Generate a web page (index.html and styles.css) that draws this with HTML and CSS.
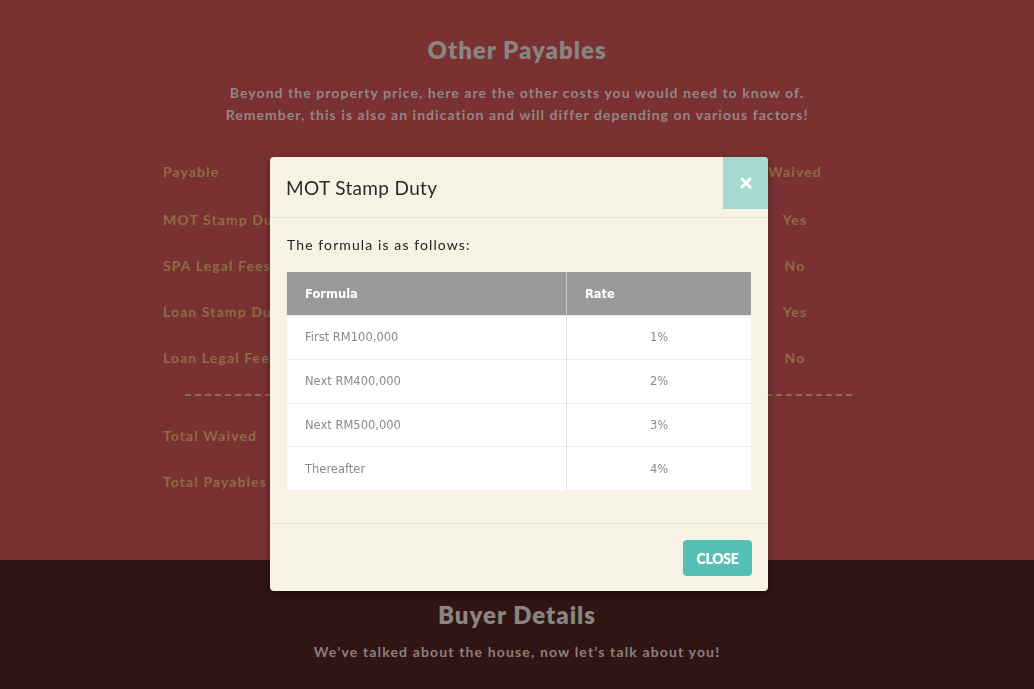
FILE: index.html
```html
<!DOCTYPE html>
<html>
<head>
<meta charset="utf-8">
<link rel="stylesheet" href="styles.css">
</head>
<body>
<section class="payables">
  <h2 class="sec-title">Other Payables</h2>
  <p class="sec-text">Beyond the property price, here are the other costs you would need to know of.<br>Remember, this is also an indication and will differ depending on various factors!</p>
  <div class="pay-table">
    <div class="pay-row pay-head"><span>Payable</span><span class="amt"></span><span class="waive">Waived</span></div>
    <div class="pay-row"><span>MOT Stamp Duty</span><span class="amt"></span><span class="waive">Yes</span></div>
    <div class="pay-row"><span>SPA Legal Fees</span><span class="amt"></span><span class="waive">No</span></div>
    <div class="pay-row"><span>Loan Stamp Duty</span><span class="amt"></span><span class="waive">Yes</span></div>
    <div class="pay-row"><span>Loan Legal Fees</span><span class="amt"></span><span class="waive">No</span></div>
    <div class="pay-divider"></div>
    <div class="pay-row"><span>Total Waived</span><span class="amt"></span><span class="waive"></span></div>
    <div class="pay-row"><span>Total Payables</span><span class="amt"></span><span class="waive"></span></div>
  </div>
</section>
<section class="buyer">
  <h2 class="sec-title">Buyer Details</h2>
  <p class="sec-text">We’ve talked about the house, now let’s talk about you!</p>
</section>

<div class="modal">
  <div class="modal-header">
    <h3 class="modal-title">MOT Stamp Duty</h3>
    <button class="modal-x" aria-label="close">
      <svg width="12" height="12" viewBox="0 0 12 12"><path d="M2 2 L10 10 M10 2 L2 10" stroke="#fff" stroke-width="3" stroke-linecap="round"/></svg>
    </button>
  </div>
  <div class="modal-body">
    <p class="modal-intro">The formula is as follows:</p>
    <table class="rate-table">
      <thead><tr><th>Formula</th><th>Rate</th></tr></thead>
      <tbody>
        <tr><td>First RM100,000</td><td class="rate">1%</td></tr>
        <tr><td>Next RM400,000</td><td class="rate">2%</td></tr>
        <tr><td>Next RM500,000</td><td class="rate">3%</td></tr>
        <tr><td>Thereafter</td><td class="rate">4%</td></tr>
      </tbody>
    </table>
  </div>
  <div class="modal-footer">
    <button class="btn-close">CLOSE</button>
  </div>
</div>
</body>
</html>
```

FILE: styles.css
```css
html, body {
  margin: 0;
  padding: 0;
}
body {
  width: 1034px;
  height: 689px;
  overflow: hidden;
  font-family: "Lato", "Open Sans", sans-serif;
  background: #311512;
}
.payables {
  background: #7a3131;
  height: 560px;
  box-sizing: border-box;
  padding-top: 34px;
}
.buyer {
  background: #301512;
  height: 129px;
  box-sizing: border-box;
  padding-top: 39px;
}
.sec-title {
  margin: 0;
  text-align: center;
  font-size: 24px;
  line-height: 32px;
  font-weight: 800;
  color: #8a8580;
  letter-spacing: 1px;
}
.sec-text {
  margin: 16px 0 0;
  text-align: center;
  font-size: 14px;
  line-height: 22px;
  font-weight: 700;
  letter-spacing: 1.05px;
  color: #948680;
}
.buyer .sec-text {
  margin-top: 10px;
  letter-spacing: 1.15px;
  color: #8c807c;
}
.pay-table {
  width: 708px;
  margin: 22px auto 0;
}
.pay-row {
  display: grid;
  grid-template-columns: 1fr 200px 64px 44px;
  height: 46px;
  align-items: center;
  font-size: 14px;
  font-weight: 700;
  letter-spacing: 1.1px;
  color: #8e6a48;
}
.pay-head {
  margin-bottom: 2px;
}
.pay-row .amt {
  text-align: center;
}
.pay-row .waive {
  text-align: center;
  white-space: nowrap;
}
.pay-divider {
  margin: 14px 19px 16px 22px;
  border-top: 2px dashed #8d6a58;
}
.modal {
  position: fixed;
  left: 270px;
  top: 157px;
  width: 498px;
  height: 434px;
  background: #f6f3e5;
  border-radius: 4px;
  box-shadow: 0 3px 9px rgba(0,0,0,0.4);
  overflow: hidden;
  display: flex;
  flex-direction: column;
}
.modal-header {
  position: relative;
  height: 61px;
  box-sizing: border-box;
  border-bottom: 1px solid #d9e4dc;
  display: flex;
  align-items: center;
  padding: 0 16px;
}
.modal-title {
  margin: 0;
  font-family: "Lato", sans-serif;
  font-weight: 400;
  font-size: 19px;
  letter-spacing: 0.35px;
  color: #2a2a2a;
}
.modal-x {
  position: absolute;
  top: 0;
  right: 0;
  width: 45px;
  height: 52px;
  border: 0;
  padding: 0;
  background: #a4dad1;
  display: flex;
  align-items: center;
  justify-content: center;
}
.modal-body {
  padding: 17px 17px 0 17px;
  height: 305px;
  box-sizing: border-box;
}
.modal-intro {
  margin: 0 0 17px 0;
  font-size: 14px;
  line-height: 20px;
  letter-spacing: 1.1px;
  color: #222;
}
.rate-table {
  width: 464px;
  border-collapse: collapse;
  font-family: "DejaVu Sans", Verdana, sans-serif;
  font-size: 11.5px;
  background: #fff;
}
.rate-table th {
  background: #9a9a9a;
  color: #fff;
  text-align: left;
  font-weight: 700;
  height: 43px;
  padding: 0 18px;
  border-right: 1px solid #c9c9c9;
}
.rate-table th:last-child {
  border-right: 0;
}
.rate-table td {
  height: 42.75px;
  padding: 0 18px;
  color: #8a8a8a;
  border-top: 1px solid #ececec;
  border-right: 1px solid #e4e4e4;
}
.rate-table td:last-child {
  border-right: 0;
}
.rate-table td.rate {
  text-align: center;
  width: 148px;
}
.modal-footer {
  flex: 1;
  border-top: 1px solid #d9e4dc;
  display: flex;
  justify-content: flex-end;
  align-items: flex-start;
  padding: 16px 16px 0;
}
.btn-close {
  width: 69px;
  height: 36px;
  border: 0;
  border-radius: 4px;
  background: #55c0b7;
  color: #fff;
  font-family: "Lato", sans-serif;
  font-weight: 800;
  font-size: 14px;
  letter-spacing: -0.3px;
  padding: 0;
}
```
